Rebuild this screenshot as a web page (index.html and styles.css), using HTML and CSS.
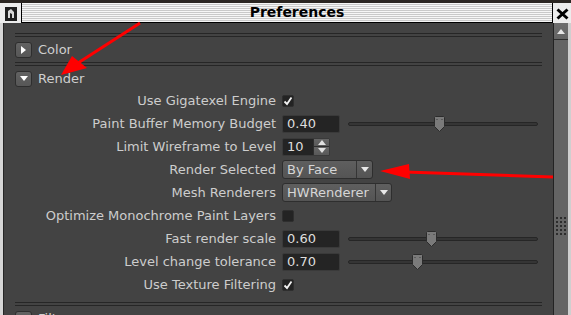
FILE: index.html
```html
<!DOCTYPE html>
<html lang="en">
<head>
    <meta charset="UTF-8">
    <meta name="viewport" content="width=device-width, initial-scale=1.0">
    <title>Preferences</title>
    <link rel="stylesheet" href="styles.css">
</head>
<body>

<div class="window">
    <div class="titlebar">
        <div class="app-icon">
            <svg width="12" height="14" viewBox="0 0 12 14">
                <rect x="0" y="0" width="12" height="14" fill="#1e1e1e"/>
                <path d="M3 11 L3 4 L6 2 L9 5 L9 11 L7 11 L7 7 L5 6 L5 11 Z" fill="#d8d8d8"/>
            </svg>
        </div>
        <div class="title-strip"><span>Preferences</span></div>
        <div class="close-btn">
            <svg width="13" height="12" viewBox="0 0 13 12">
                <path d="M1.5 1.5 L11.5 10.5 M11.5 1.5 L1.5 10.5" stroke="#000" stroke-width="3"/>
            </svg>
        </div>
    </div>

    <div class="main">
        <div class="frame-left"></div>
        <div class="content">
            <div class="divider"></div>
            <div class="section-head">
                <span class="toggle">
                    <svg width="7" height="8" viewBox="0 0 7 8"><path d="M1 0 L6 4 L1 8 Z" fill="#fff"/></svg>
                </span>
                Color
            </div>
            <div class="divider"></div>
            <div class="section-head open">
                <span class="toggle">
                    <svg width="8" height="7" viewBox="0 0 8 7"><path d="M0 1 L8 1 L4 6 Z" fill="#fff"/></svg>
                </span>
                Render
            </div>

            <div class="form">
                <div class="label">Use Gigatexel Engine</div>
                <div class="ctrl"><span class="check on"><svg width="10" height="10" viewBox="0 0 10 10"><path d="M1.5 5.5 L4 8 L8.5 1.5" stroke="#f2f2f2" stroke-width="1.8" fill="none"/></svg></span></div>

                <div class="label">Paint Buffer Memory Budget</div>
                <div class="ctrl">
                    <span class="field">0.40</span>
                    <span class="slider"><span class="groove"></span><span class="thumb" style="left: 86px"><svg width="11" height="16" viewBox="0 0 11 16"><path d="M1.5 0.5 L9.5 0.5 L10.5 1.5 L10.5 10.5 L5.5 15.5 L0.5 10.5 L0.5 1.5 Z" fill="#7a7a7a" stroke="#2c2c2c"/><path d="M3 3 L3 4 M8 3 L8 4" stroke="#3a3a3a"/></svg></span></span>
                </div>

                <div class="label">Limit Wireframe to Level</div>
                <div class="ctrl">
                    <span class="spin">
                        <span class="spin-text">10</span>
                        <span class="spin-btns">
                            <span class="spin-btn"><svg width="8" height="5" viewBox="0 0 8 5"><path d="M0 5 L4 0 L8 5 Z" fill="#e0e0e0"/></svg></span>
                            <span class="spin-btn"><svg width="8" height="5" viewBox="0 0 8 5"><path d="M0 0 L8 0 L4 5 Z" fill="#e0e0e0"/></svg></span>
                        </span>
                    </span>
                </div>

                <div class="label">Render Selected</div>
                <div class="ctrl">
                    <span class="combo combo-face"><span class="combo-text">By Face</span><span class="combo-arrow"><svg width="8" height="5" viewBox="0 0 8 5"><path d="M0 0 L8 0 L4 5 Z" fill="#e8e8e8"/></svg></span></span>
                </div>

                <div class="label">Mesh Renderers</div>
                <div class="ctrl">
                    <span class="combo combo-mesh"><span class="combo-text">HWRenderer</span><span class="combo-arrow"><svg width="8" height="5" viewBox="0 0 8 5"><path d="M0 0 L8 0 L4 5 Z" fill="#e8e8e8"/></svg></span></span>
                </div>

                <div class="label">Optimize Monochrome Paint Layers</div>
                <div class="ctrl"><span class="check"></span></div>

                <div class="label">Fast render scale</div>
                <div class="ctrl">
                    <span class="field">0.60</span>
                    <span class="slider"><span class="groove"></span><span class="thumb" style="left: 78px"><svg width="11" height="16" viewBox="0 0 11 16"><path d="M1.5 0.5 L9.5 0.5 L10.5 1.5 L10.5 10.5 L5.5 15.5 L0.5 10.5 L0.5 1.5 Z" fill="#7a7a7a" stroke="#2c2c2c"/><path d="M3 3 L3 4 M8 3 L8 4" stroke="#3a3a3a"/></svg></span></span>
                </div>

                <div class="label">Level change tolerance</div>
                <div class="ctrl">
                    <span class="field">0.70</span>
                    <span class="slider"><span class="groove"></span><span class="thumb" style="left: 64px"><svg width="11" height="16" viewBox="0 0 11 16"><path d="M1.5 0.5 L9.5 0.5 L10.5 1.5 L10.5 10.5 L5.5 15.5 L0.5 10.5 L0.5 1.5 Z" fill="#7a7a7a" stroke="#2c2c2c"/><path d="M3 3 L3 4 M8 3 L8 4" stroke="#3a3a3a"/></svg></span></span>
                </div>

                <div class="label">Use Texture Filtering</div>
                <div class="ctrl"><span class="check on"><svg width="10" height="10" viewBox="0 0 10 10"><path d="M1.5 5.5 L4 8 L8.5 1.5" stroke="#f2f2f2" stroke-width="1.8" fill="none"/></svg></span></div>
            </div>

            <div class="divider bottom"></div>
            <div class="section-head">
                <span class="toggle">
                    <svg width="7" height="8" viewBox="0 0 7 8"><path d="M1 0 L6 4 L1 8 Z" fill="#fff"/></svg>
                </span>
                Filters
            </div>
        </div>

        <div class="scrollbar">
            <div class="scroll-up">
                <svg width="8" height="5" viewBox="0 0 8 5"><path d="M0 5 L4 0 L8 5 Z" fill="#e6e6e6"/></svg>
            </div>
            <div class="scroll-thumb">
                <div class="grip"></div>
            </div>
        </div>
        <div class="frame-right"></div>
    </div>

    <!-- red annotation arrows drawn over the screenshot -->
    <svg class="annotations" width="571" height="315" viewBox="0 0 571 315">
        <path d="M140 23 L78 63" stroke="#ff0000" stroke-width="3"/>
        <path d="M61 75 L72 56 L87 68 Z" fill="#ff0000"/>
        <path d="M405 172 L553 177" stroke="#ff0000" stroke-width="3"/>
        <path d="M380 171 L409 164 L410 179 Z" fill="#ff0000"/>
    </svg>
</div>

</body>
</html>
```

FILE: styles.css
```css
body {
    margin: 0;
    background-color: #2b2622;
    font-family: "DejaVu Sans", sans-serif;
}
.window {
    position: relative;
    width: 571px;
    height: 315px;
    overflow: hidden;
    background-color: #434343;
}
.titlebar {
    display: flex;
    height: 20px;
    border-top: 3px solid #2b2622;
    background-color: #ececec;
}
.app-icon {
    width: 21px;
    display: flex;
    justify-content: center;
    padding-top: 4px;
    box-sizing: border-box;
}
.title-strip {
    width: 532px;
    box-sizing: border-box;
    border: 1px solid #000;
    border-top: none;
    background: repeating-linear-gradient(to bottom, #f6f6f6 0, #f6f6f6 1px, #c9c9c9 1px, #c9c9c9 2px);
    text-align: center;
    padding-left: 20px;
    font-weight: bold;
    font-size: 14px;
    line-height: 19px;
    color: #000;
}
.close-btn {
    flex: 1;
    display: flex;
    justify-content: center;
    padding-top: 5px;
    box-sizing: border-box;
}
.main {
    display: flex;
    height: 292px;
}
.frame-left {
    width: 3px;
    background-color: #d6d6d6;
    border-right: 1px solid #262626;
}
.frame-right {
    width: 3px;
    background-color: #cfcfcf;
}
.content {
    width: 549px;
    box-sizing: border-box;
    padding: 10px 11px 0 11px;
    color: #cdcdcd;
    font-size: 13px;
}
.divider {
    height: 2px;
    border-top: 1px solid #262626;
    border-bottom: 1px solid #262626;
}
.divider.bottom {
    margin-top: 6px;
}
.section-head {
    display: flex;
    align-items: center;
    gap: 6px;
    height: 25px;
    font-size: 13px;
    color: #cfcfcf;
}
.section-head.open {
    height: 25px;
    margin-bottom: -2px;
}
.toggle {
    width: 15px;
    height: 14px;
    display: flex;
    align-items: center;
    justify-content: center;
    background: linear-gradient(#626262, #575757);
    border: 1px solid #2e2e2e;
    border-radius: 3px;
}
.form {
    display: grid;
    grid-template-columns: 261px 1fr;
    grid-auto-rows: 23px;
    column-gap: 6px;
}
.label {
    text-align: right;
    line-height: 23px;
    white-space: nowrap;
}
.ctrl {
    display: flex;
    align-items: center;
}
.check {
    width: 12px;
    height: 12px;
    background-color: #232323;
    border: 1px solid #2e2e2e;
    border-radius: 2px;
    box-sizing: border-box;
    display: flex;
    align-items: center;
    justify-content: center;
}
.field {
    width: 58px;
    height: 18px;
    box-sizing: border-box;
    background-color: #242424;
    border: 1px solid #3a3a3a;
    border-radius: 2px;
    padding-left: 4px;
    line-height: 16px;
    color: #dedede;
    font-size: 13px;
}
.slider {
    position: relative;
    width: 190px;
    height: 18px;
    margin-left: 8px;
    display: flex;
    align-items: center;
}
.groove {
    width: 100%;
    height: 4px;
    box-sizing: border-box;
    background-color: #353535;
    border: 1px solid #262626;
    border-radius: 2px;
}
.thumb {
    position: absolute;
    top: 1px;
    width: 11px;
    height: 16px;
    display: flex;
}
.spin {
    display: flex;
    width: 48px;
    height: 18px;
    box-sizing: border-box;
    border: 1px solid #3a3a3a;
    border-radius: 2px;
    background-color: #242424;
}
.spin-text {
    flex: 1;
    padding-left: 4px;
    line-height: 16px;
    color: #dedede;
}
.spin-btns {
    width: 15px;
    display: flex;
    flex-direction: column;
    border-left: 1px solid #2e2e2e;
}
.spin-btn {
    flex: 1;
    display: flex;
    align-items: center;
    justify-content: center;
    background: linear-gradient(#666, #595959);
}
.spin-btn + .spin-btn {
    border-top: 1px solid #2e2e2e;
}
.combo {
    display: flex;
    height: 19px;
    box-sizing: border-box;
    border: 1px solid #2e2e2e;
    border-radius: 3px;
    background: linear-gradient(#5f5f5f, #545454);
    color: #d6d6d6;
}
.combo-face {
    width: 91px;
}
.combo-mesh {
    width: 110px;
}
.combo-text {
    flex: 1;
    padding-left: 4px;
    line-height: 17px;
}
.combo-arrow {
    width: 15px;
    border-left: 1px solid #353535;
    display: flex;
    align-items: center;
    justify-content: center;
}
.scrollbar {
    width: 14px;
    border-left: 1px solid #232323;
    display: flex;
    flex-direction: column;
    background-color: #626262;
}
.scroll-up {
    height: 16px;
    display: flex;
    align-items: center;
    justify-content: center;
    background: linear-gradient(#6e6e6e, #646464);
    border-bottom: 1px solid #2e2e2e;
}
.scroll-thumb {
    flex: 1;
    background-color: #646464;
}
.grip {
    width: 10px;
    height: 18px;
    margin: 177px auto 0 auto;
    background-image: radial-gradient(circle at 1px 1px, #2c2c2c 1px, transparent 1.2px);
    background-size: 4px 4px;
    background-position: 0 0;
}
.annotations {
    position: absolute;
    top: 0;
    left: 0;
    pointer-events: none;
}
```
